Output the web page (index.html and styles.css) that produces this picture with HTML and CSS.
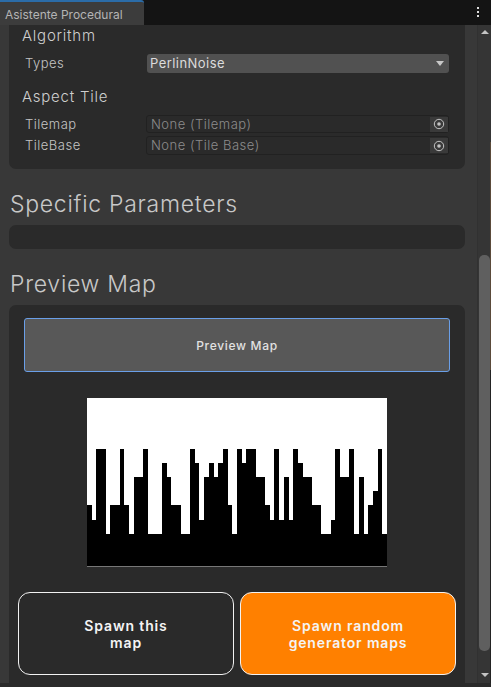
FILE: index.html
```html
<!DOCTYPE html>
<html>
<head>
<title>Asistente Procedural</title>
<link rel="stylesheet" href="styles.css">
</head>
<body>

<div class="tab-bar">
  <div class="tab">Asistente Procedural</div>
  <div class="kebab"><span></span><span></span><span></span></div>
</div>

<div class="window">
  <div class="content">
    <section class="panel panel-top">
      <h3>Algorithm</h3>
      <div class="row row-types">
        <label>Types</label>
        <div class="select">PerlinNoise<i class="caret"></i></div>
      </div>
      <h3 class="aspect">Aspect Tile</h3>
      <div class="row">
        <label>Tilemap</label>
        <div class="object-field">None (Tilemap)
          <span class="picker"><svg width="12" height="12" viewBox="0 0 12 12"><circle cx="6" cy="6" r="4.7" fill="none" stroke="#c4c4c4" stroke-width="1"/><circle cx="6" cy="6" r="1.8" fill="#c4c4c4"/></svg></span>
        </div>
      </div>
      <div class="row">
        <label>TileBase</label>
        <div class="object-field">None (Tile Base)
          <span class="picker"><svg width="12" height="12" viewBox="0 0 12 12"><circle cx="6" cy="6" r="4.7" fill="none" stroke="#c4c4c4" stroke-width="1"/><circle cx="6" cy="6" r="1.8" fill="#c4c4c4"/></svg></span>
        </div>
      </div>
    </section>

    <h2 class="title-specific">Specific Parameters</h2>
    <section class="panel panel-empty"></section>

    <h2 class="title-preview">Preview Map</h2>
    <section class="panel panel-preview">
      <button class="preview-btn">Preview Map</button>
      <svg class="map" width="300" height="169" viewBox="0 0 300 169">
        <rect width="300" height="168" fill="#fff"/>
        <rect y="168" width="300" height="1" fill="#777"/>
        <path d="M0 168V107H5V122H9V51H19V136H23V107H33V51H37V107H42V136H47V79H56V51H61V136H75V65H80V79H84V107H94V136H103V51H108V65H112V122H117V79H122V65H127V79H131V65H136V51H141V107H145V136H150V51H155V65H159V51H169V79H178V107H183V122H187V51H192V122H197V79H202V122H206V51H211V65H216V79H225V107H234V136H244V122H248V51H253V79H262V51H267V136H272V79H277V136H281V107H286V93H291V51H295V136H300V168Z" fill="#000"/>
      </svg>
      <div class="spawn-row">
        <button class="spawn">Spawn this<br>map</button>
        <button class="spawn spawn-orange">Spawn random<br>generator maps</button>
      </div>
    </section>
  </div>

  <div class="scrollbar">
    <i class="arrow-up"></i>
    <div class="thumb"></div>
    <i class="arrow-down"></i>
  </div>
</div>

</body>
</html>
```

FILE: styles.css
```css
* {
  box-sizing: border-box;
}
html, body {
  height: 100%;
}
body {
  margin: 0;
  background-color: #2a2a2a;
  font-family: Inter, "Noto Sans", sans-serif;
  color: #c4c4c4;
  overflow: hidden;
}

/* Tab strip */
.tab-bar {
  height: 25px;
  background-color: #141414;
  display: flex;
  justify-content: space-between;
}
.tab {
  width: 144px;
  background-color: #3c3c3c;
  border-top: 2px solid #2b6ca8;
  border-top-right-radius: 3px;
  padding: 4px 0 0 5px;
  font-size: 12px;
  line-height: 18px;
  color: #b4b4b4;
}
.kebab {
  width: 13px;
  margin-right: 7px;
  display: flex;
  flex-direction: column;
  align-items: center;
  gap: 2px;
  padding-top: 7px;
}
.kebab span {
  width: 2px;
  height: 2px;
  background-color: #ddd;
}

/* Window body */
.window {
  height: 658px;
  display: flex;
  background-color: #383838;
}
.content {
  width: 477px;
  padding: 0 12px 0 9px;
}
.panel {
  background-color: #2a2a2a;
  border-radius: 7px;
}
.panel-top {
  height: 144px;
  border-radius: 0 0 7px 7px;
  padding: 2px 16px 0 13px;
}
h3 {
  margin: 0;
  font-size: 15px;
  font-weight: 300;
  line-height: 18px;
  letter-spacing: 0.75px;
  color: #cfcfcf;
}
h3.aspect {
  margin-top: 15px;
  margin-bottom: 9px;
}
h2 {
  margin: 0;
  font-size: 23px;
  font-weight: 300;
  line-height: 28px;
  letter-spacing: 0.72px;
  color: #c8c8c8;
  padding-left: 1px;
}
.title-specific {
  margin-top: 21px;
}
.title-preview {
  margin-top: 21px;
}
.row {
  display: flex;
  align-items: center;
  height: 18px;
  margin-bottom: 3px;
}
.row + .row {
  height: 19px;
}
.row-types {
  height: 19px;
  margin-top: 9px;
  margin-bottom: 0;
}
.row label {
  width: 124px;
  padding-left: 3px;
  font-size: 13px;
  font-weight: 300;
  letter-spacing: 0.5px;
  line-height: 17px;
  color: #c4c4c4;
}
.select {
  flex: 1;
  height: 19px;
  margin-left: 1px;
  background-color: #515151;
  border-radius: 3px;
  padding-left: 3px;
  font-size: 13px;
  line-height: 19px;
  letter-spacing: 0.45px;
  color: #dcdcdc;
  position: relative;
}
.caret {
  position: absolute;
  right: 5px;
  top: 7px;
  border-left: 4px solid transparent;
  border-right: 4px solid transparent;
  border-top: 5px solid #c8c8c8;
}
.object-field {
  flex: 1;
  height: 100%;
  background-color: #2a2a2a;
  border: 1px solid #212121;
  border-radius: 3px;
  padding-left: 4px;
  font-size: 13px;
  font-weight: 300;
  line-height: 17px;
  letter-spacing: 0.5px;
  color: #8c8c8c;
  display: flex;
  justify-content: space-between;
  align-items: center;
}
.picker {
  width: 18px;
  height: 15px;
  background-color: #3a3a3a;
  display: flex;
  align-items: center;
  justify-content: center;
}
.panel-empty {
  height: 24px;
  margin-top: 7px;
}
.panel-preview {
  height: 378px;
  margin-top: 7px;
  border-radius: 7px 7px 0 0;
  padding-top: 13px;
}
.preview-btn {
  display: block;
  width: 426px;
  height: 54px;
  margin-left: 15px;
  background-color: #585858;
  border: 1px solid #6a9fe8;
  border-radius: 3px;
  font-family: inherit;
  font-size: 12px;
  font-weight: 500;
  letter-spacing: 0.7px;
  color: #e2e2e2;
}
.map {
  display: block;
  margin: 26px 0 0 78px;
}
.spawn-row {
  display: flex;
  gap: 6px;
  margin: 25px 0 0 9px;
}
.spawn {
  width: 216px;
  height: 83px;
  background-color: #2a2a2a;
  border: 1px solid #f2f2f2;
  border-radius: 12px;
  font-family: inherit;
  font-size: 14px;
  font-weight: 600;
  line-height: 17px;
  letter-spacing: 0.85px;
  color: #f4f4f4;
}
.spawn-orange {
  background-color: #ff8000;
}

/* Scrollbar */
.scrollbar {
  width: 14px;
  background-color: #353535;
  border-left: 1px solid #313131;
  position: relative;
}
/* 1px of whatever is behind the window, at the far right edge */
.scrollbar::after {
  content: "";
  position: absolute;
  right: 0;
  top: 0;
  bottom: 0;
  width: 1px;
  background: linear-gradient(#353535 117px, #5a4a3a 117px, #5a4a3a 345px, #232323 345px);
}
.thumb {
  position: absolute;
  left: 1px;
  top: 230px;
  width: 11px;
  height: 396px;
  background-color: #5f5f5f;
  border-radius: 5px;
}
.arrow-up, .arrow-down {
  position: absolute;
  left: 3px;
  border-left: 4px solid transparent;
  border-right: 4px solid transparent;
}
.arrow-up {
  top: 5px;
  border-bottom: 4px solid #c4c4c4;
}
.arrow-down {
  top: 648px;
  border-top: 4px solid #c4c4c4;
}
```
